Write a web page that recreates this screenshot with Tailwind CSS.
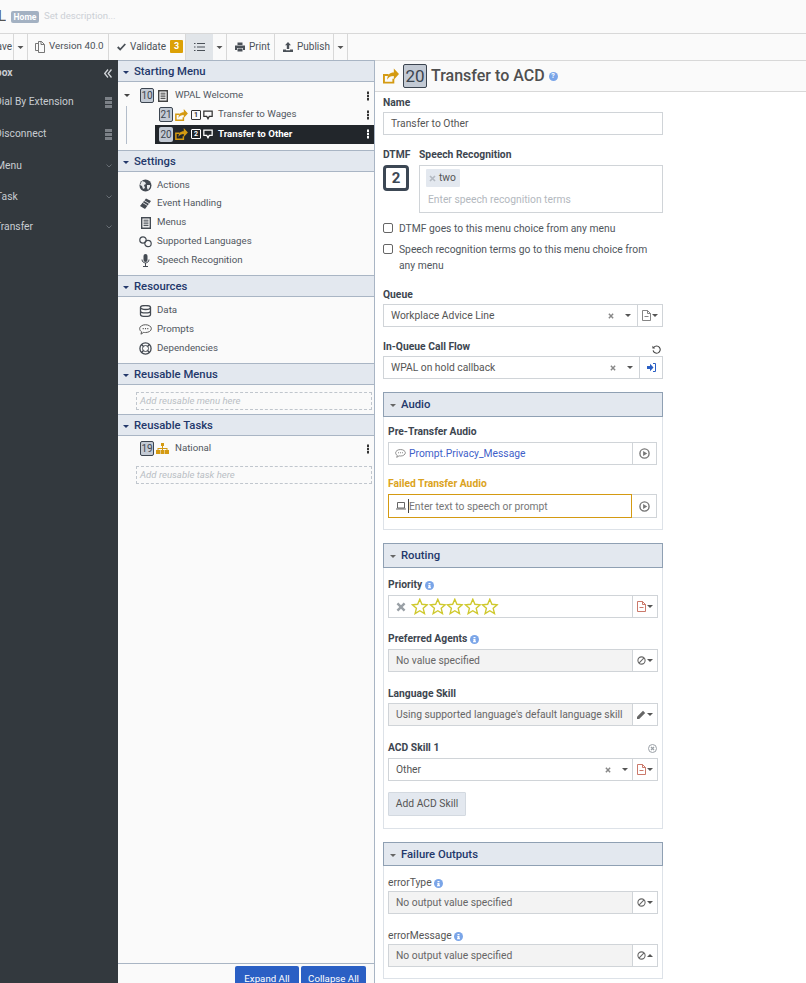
<!DOCTYPE html>
<html lang="en">
<head>
  <meta charset="UTF-8">
  <title>WPAL</title>
  <script src="https://cdn.jsdelivr.net/npm/@tailwindcss/browser@4"></script>
</head>
<body class="font-['Roboto',sans-serif] text-[10.3px] text-[#50565c] bg-white overflow-hidden">
<svg class="hidden" width="0" height="0">
  <symbol id="transfer" viewBox="0 0 17 16"><path d="M0 6h6v2H2v6h8v-3h2v5H0z" fill="#d49a12"/><path d="M4.500 12c0-5 2.500-7.800 7-7.800V0L17 6l-5.500 6V8c-3.500 0-5.500 1-7 4z" fill="#d49a12"/></symbol>
  <symbol id="caret" viewBox="0 0 8 4"><path d="M0 0h8L4 4z" fill="currentColor"/></symbol>
  <symbol id="kebab" viewBox="0 0 3 11"><path d="M0 0h3v3H0zM0 4h3v3H0zM0 8h3v3H0z" fill="currentColor"/></symbol>
  <symbol id="menuicon" viewBox="0 0 10 12"><path d="M.7.700h8.600v10.600H.7z" fill="none" stroke="currentColor" stroke-width="1.400"/><path d="M2.500 3.200h5M2.500 5h5M2.500 6.800h5M2.500 8.600h5" stroke="currentColor" stroke-width="1"/></symbol>
  <symbol id="bubble" viewBox="0 0 12 11"><path d="M1 .800h10v6.400H7.500L6 10 4.500 7.200H1z" fill="none" stroke="currentColor" stroke-width="1.500"/></symbol>
  <symbol id="doc" viewBox="0 0 9 11"><path d="M.5.500h5l3 3v7h-8zM5.500.500v3h3M2.500 6.500h4" fill="none" stroke="currentColor" stroke-width=".9"/></symbol>
  <symbol id="ban" viewBox="0 0 10 10"><circle cx="5" cy="5" r="4" fill="none" stroke="currentColor" stroke-width="1.200"/><path d="M2.200 7.800l5.600-5.600" stroke="currentColor" stroke-width="1.200"/></symbol>
  <symbol id="play" viewBox="0 0 12 12"><circle cx="6" cy="6" r="5" fill="none" stroke="currentColor" stroke-width="1.500"/><path d="M4.500 3.300L9 6l-4.500 2.700z" fill="currentColor"/></symbol>
  <symbol id="clear" viewBox="0 0 7 7"><path d="M1 1l5 5M6 1L1 6" stroke="currentColor" stroke-width="1.700"/></symbol>
  <symbol id="info" viewBox="0 0 9 9"><circle cx="4.500" cy="4.500" r="4.500" fill="#7aa5e8"/><path d="M3.500 2h2v1.200h-2zM3.500 3.900h2v2.300h.5v1H3v-1h.5v-1.300h-.4z" fill="#fff"/></symbol>
  <symbol id="star" viewBox="0 0 16 16"><path d="M8 1.200l2 4.700 5 .5-3.800 3.300 1.200 5L8 12l-4.400 2.700 1.200-5L1 6.400l5-.5z" fill="none" stroke="#cfc92e" stroke-width="1.300"/></symbol>
  <symbol id="bubbledots" viewBox="0 0 12 10"><path d="M6 .6c3 0 5.400 1.600 5.400 3.600S9 7.800 6 7.800c-.6 0-1.100 0-1.600-.2L1.800 9.300l.6-2.200C1.200 6.400.6 5.300.6 4.200.6 2.200 3 .6 6 .6z" fill="none" stroke="currentColor" stroke-width=".9"/><path d="M3.400 3.700h1v1h-1zM5.500 3.700h1v1h-1zM7.600 3.700h1v1h-1z" fill="currentColor"/></symbol>
</svg>

<div class="w-[806px] h-[983px] flex flex-col overflow-hidden">
  <!-- Header -->
  <div class="h-[34px] shrink-0 flex items-center bg-[#fafafa] border-b border-[#d8d8d8] overflow-hidden">
    <span class="w-[6px] overflow-hidden flex justify-end text-[15px] text-[#555]"><span class="shrink-0">WPAL</span></span>
    <span class="ml-[5px] w-[28px] h-[12px] bg-[#a3b1c2] rounded-[2px] text-white text-[8.5px] font-bold leading-[12px] text-center">Home</span>
    <span class="ml-[5px] text-[#ccd0d6] text-[9.6px]">Set description...</span>
  </div>
  <!-- Toolbar -->
  <div class="h-[26px] shrink-0 flex items-stretch bg-[#fafafa] text-[#4b5158] text-[10px] whitespace-nowrap">
    <div class="w-[14px] border-r border-[#d8d8d8] flex items-center justify-end overflow-hidden pb-[1px]"><span class="shrink-0 pr-[1px]">Save</span></div>
    <div class="w-[14px] border-r border-[#d8d8d8] flex items-center justify-center text-[#555]"><svg class="w-[7px] h-[3px]"><use href="#caret"/></svg></div>
    <div class="w-[81px] border-r border-[#d8d8d8] flex items-center pl-[7px] gap-[4px] text-[9.8px] pb-[1px]"><svg class="w-[10px] h-[12px] text-[#555]" viewBox="0 0 10 12"><path d="M.5 2.500h3v-2h3l3 3v8h-6v-2h-3zM3.500 2.500v7M6 .5v3h3" fill="none" stroke="currentColor" stroke-width=".8"/></svg>Version 40.0</div>
    <div class="w-[77px] border-r border-[#d8d8d8] flex items-center pl-[8px] gap-[4px] pb-[1px]"><svg class="w-[9px] h-[8px]" viewBox="0 0 9 8"><path d="M.7 4l2.500 2.500L8.300 1" fill="none" stroke="#4b5158" stroke-width="1.800"/></svg>Validate<span class="w-[13px] h-[13px] bg-[#dca106] rounded-[1px] text-white text-[9px] font-bold text-center leading-[13px]">3</span></div>
    <div class="w-[27px] bg-[#e1e5e9] flex items-center justify-center"><svg class="w-[11px] h-[10px]" viewBox="0 0 11 10"><path d="M3 1.500h8M3 5h8M3 8.500h8" stroke="#4b5158" stroke-width="1.200"/><path d="M0 1h1.500v1H0zM0 4.500h1.500v1H0zM0 8h1.500v1H0z" fill="#4b5158"/></svg></div>
    <div class="w-[14px] border-r border-[#d8d8d8] flex items-center justify-center text-[#555]"><svg class="w-[7px] h-[3px]"><use href="#caret"/></svg></div>
    <div class="w-[48px] border-r border-[#d8d8d8] flex items-center pl-[8px] gap-[4px] pb-[1px]"><svg class="w-[10px] h-[10px]" viewBox="0 0 10 10"><path d="M2.500 3V.5h5V3M0 3.500h10V8H8V6H2v2H0zM2.500 6.500h5v3h-5z" fill="#4b5158"/></svg>Print</div>
    <div class="w-[59px] border-r border-[#d8d8d8] flex items-center pl-[8px] gap-[4px] pb-[1px]"><svg class="w-[10px] h-[10px]" viewBox="0 0 10 10"><path d="M5 0l3 3.200H6.200V7H3.800V3.200H2zM0 7.500h3V8.300h4V7.500h3V10H0z" fill="#4b5158"/></svg>Publish</div>
    <div class="w-[14px] border-r border-[#d8d8d8] flex items-center justify-center text-[#555]"><svg class="w-[7px] h-[3px]"><use href="#caret"/></svg></div>
  </div>

  <div class="flex-1 flex min-h-0">
    <!-- Toolbox -->
    <aside class="w-[118px] shrink-0 bg-[#33393e] text-[#c8ccd1] overflow-hidden whitespace-nowrap">
      <div class="h-[26px] flex items-center justify-between pr-[6px] font-bold"><span class="-ml-[24px]">Toolbox</span><svg class="w-[8px] h-[9px]" viewBox="0 0 8 9"><path d="M4 .5L.7 4.500 4 8.500M7.500 .5L4.200 4.500l3.300 4" fill="none" stroke="#d0d4d8" stroke-width="1.300"/></svg></div>
      <div class="h-[32px] flex items-center justify-between pr-[6px]"><span class="-ml-[5px]">Dial By Extension</span><span class="w-[7px] h-[11px] bg-[repeating-linear-gradient(#7c8187_0_3px,transparent_3px_4px)]"></span></div>
      <div class="h-[32px] flex items-center justify-between pr-[6px]"><span class="-ml-[5px]">Disconnect</span><span class="w-[7px] h-[11px] bg-[repeating-linear-gradient(#7c8187_0_3px,transparent_3px_4px)]"></span></div>
      <div class="h-[32px] flex items-center justify-between pr-[6px]"><span class="-ml-[4px]">Menu</span><svg class="w-[6px] h-[4px]" viewBox="0 0 6 4"><path d="M.5.500L3 3 5.500.500" fill="none" stroke="#676d73"/></svg></div>
      <div class="h-[30px] flex items-center justify-between pr-[6px]"><span class="-ml-[4px]">Task</span><svg class="w-[6px] h-[4px]" viewBox="0 0 6 4"><path d="M.5.500L3 3 5.500.500" fill="none" stroke="#676d73"/></svg></div>
      <div class="h-[30px] flex items-center justify-between pr-[6px]"><span class="-ml-[5px]">Transfer</span><svg class="w-[6px] h-[4px]" viewBox="0 0 6 4"><path d="M.5.500L3 3 5.500.500" fill="none" stroke="#676d73"/></svg></div>
    </aside>

    <!-- Tree panel -->
    <section class="w-[257px] shrink-0 bg-[#fafafa] flex flex-col border-r border-[#a9b5c4] text-[#50565e] text-[9.7px]">
      <div class="h-[22px] shrink-0 bg-[#e3e8ef] border-y border-[#a9b5c4] pt-[2px] flex items-center text-[#24386b] text-[11.3px] font-medium"><svg class="ml-[5px] mr-[5px] w-[6px] h-[3px]"><use href="#caret"/></svg>Starting Menu</div>
      <div class="h-[68px] shrink-0 pt-[4px] relative">
        <div class="absolute left-[8px] top-[24px] w-px h-[38px] bg-[#b3bdca]"></div>
        <div class="h-[19px] flex items-center pr-[5px]">
          <svg class="ml-[6px] w-[6px] h-[3px] text-[#444]"><use href="#caret"/></svg>
          <span class="ml-[10px] w-[14px] h-[15px] bg-[#c3cad4] border border-[#3c4550] rounded-[2px] text-[10px] text-[#3c4550] text-center leading-[13px]">10</span>
          <svg class="ml-[4px] w-[10px] h-[12px] text-[#444]"><use href="#menuicon"/></svg>
          <span class="ml-[7px]">WPAL Welcome</span>
          <svg class="ml-auto w-[2.500px] h-[10px] text-[#333]"><use href="#kebab"/></svg>
        </div>
        <div class="h-[20px] pb-[1px] flex items-center pr-[5px] pl-[41px]">
          <span class="w-[14px] h-[15px] bg-[#c3cad4] border border-[#3c4550] rounded-[2px] text-[10px] text-[#3c4550] text-center leading-[13px]">21</span>
          <svg class="ml-[2px] w-[13px] h-[12px]"><use href="#transfer"/></svg>
          <span class="ml-[3px] w-[10px] h-[10px] border border-[#333] rounded-[1px] text-[7px] font-bold text-center leading-[8px] text-[#333]">1</span>
          <svg class="ml-[2px] w-[10px] h-[10px] text-[#333]"><use href="#bubble"/></svg>
          <span class="ml-[5px]">Transfer to Wages</span>
          <svg class="ml-auto w-[2.500px] h-[10px] text-[#333]"><use href="#kebab"/></svg>
        </div>
        <div class="ml-[37px] h-[19px] pb-[1px] bg-[#22262b] flex items-center pr-[5px] pl-[4px] text-white font-bold">
          <span class="w-[14px] h-[15px] bg-[#c3cad4] rounded-[2px] text-[10px] font-normal text-[#3c4550] text-center leading-[15px]">20</span>
          <svg class="ml-[2px] w-[13px] h-[12px]"><use href="#transfer"/></svg>
          <span class="ml-[3px] w-[10px] h-[10px] border border-white rounded-[1px] text-[7px] text-center leading-[8px]">2</span>
          <svg class="ml-[2px] w-[10px] h-[10px] text-white"><use href="#bubble"/></svg>
          <span class="ml-[5px]">Transfer to Other</span>
          <svg class="ml-auto w-[2.500px] h-[10px] text-white"><use href="#kebab"/></svg>
        </div>
      </div>

      <div class="h-[22px] shrink-0 bg-[#e3e8ef] border-y border-[#a9b5c4] pt-[2px] flex items-center text-[#24386b] text-[11.3px] font-medium"><svg class="ml-[5px] mr-[5px] w-[6px] h-[3px]"><use href="#caret"/></svg>Settings</div>
      <div class="h-[103px] shrink-0 pt-[4px] pl-[21px]">
        <div class="h-[18px] flex items-center gap-[5px]"><svg class="w-[13px] h-[13px]" viewBox="0 0 13 13"><circle cx="6.500" cy="6.500" r="6" fill="#444a52"/><path d="M3 2l3 1 1 2-2 1 1 3-2 1-1-3-2-1zM8 6l3 0 0 2-2 3-1-2z" fill="#e8eaec"/></svg>Actions</div>
        <div class="h-[19px] flex items-center gap-[5px]"><svg class="w-[13px] h-[12px]" viewBox="0 0 13 12"><path d="M7 .5l5 2.500-6 8-5-3z" fill="#444a52"/><path d="M5 2.500l5 3M3.500 4.500l5 3" stroke="#fff" stroke-width=".8"/></svg>Event Handling</div>
        <div class="h-[19px] flex items-center gap-[5px]"><span class="w-[13px] flex justify-center"><svg class="w-[10px] h-[12px] text-[#444a52]"><use href="#menuicon"/></svg></span>Menus</div>
        <div class="h-[19px] flex items-center gap-[5px]"><svg class="w-[13px] h-[12px]" viewBox="0 0 13 12"><circle cx="4" cy="4" r="3.200" fill="none" stroke="#444a52" stroke-width="1.200"/><circle cx="9" cy="7.500" r="3.200" fill="none" stroke="#444a52" stroke-width="1.200"/></svg>Supported Languages</div>
        <div class="h-[19px] flex items-center gap-[5px]"><svg class="w-[13px] h-[13px]" viewBox="0 0 13 13"><rect x="4.500" y="0" width="4" height="8" rx="2" fill="#444a52"/><path d="M3 5.500c0 4.500 7 4.500 7 0M6.500 9v3M4 12.500h5" fill="none" stroke="#444a52"/></svg>Speech Recognition</div>
      </div>

      <div class="h-[22px] shrink-0 bg-[#e3e8ef] border-y border-[#a9b5c4] pt-[2px] flex items-center text-[#24386b] text-[11.3px] font-medium"><svg class="ml-[5px] mr-[5px] w-[6px] h-[3px]"><use href="#caret"/></svg>Resources</div>
      <div class="h-[66px] shrink-0 pt-[4px] pl-[21px]">
        <div class="h-[19px] flex items-center gap-[5px]"><svg class="w-[13px] h-[12px]" viewBox="0 0 13 12"><ellipse cx="6.500" cy="2.500" rx="5" ry="2" fill="none" stroke="#444a52" stroke-width="1.300"/><path d="M1.500 2.500v7c0 2.600 10 2.600 10 0v-7M1.500 6c0 2.600 10 2.600 10 0" fill="none" stroke="#444a52" stroke-width="1.300"/></svg>Data</div>
        <div class="h-[19px] flex items-center gap-[5px]"><svg class="w-[13px] h-[11px] text-[#555]"><use href="#bubbledots"/></svg>Prompts</div>
        <div class="h-[19px] flex items-center gap-[5px]"><svg class="w-[13px] h-[13px]" viewBox="0 0 13 13"><circle cx="6.500" cy="6.500" r="5.600" fill="none" stroke="#444a52" stroke-width="1.300"/><circle cx="6.500" cy="6.500" r="3" fill="none" stroke="#444a52"/><path d="M2.500 2.500l2 2M10.500 2.500l-2 2M2.500 10.500l2-2M10.500 10.500l-2-2" stroke="#444a52" stroke-width="1.300"/></svg>Dependencies</div>
      </div>

      <div class="h-[22px] shrink-0 bg-[#e3e8ef] border-y border-[#a9b5c4] pt-[2px] flex items-center text-[#24386b] text-[11.3px] font-medium"><svg class="ml-[5px] mr-[5px] w-[6px] h-[3px]"><use href="#caret"/></svg>Reusable Menus</div>
      <div class="h-[29px] shrink-0 pt-[7px] pl-[18px] pr-[2px]"><div class="h-[18px] border border-dashed border-[#c0c6cd] pl-[3px] italic text-[#b9bec4] text-[9.6px] leading-[16px]">Add reusable menu here</div></div>

      <div class="h-[22px] shrink-0 bg-[#e3e8ef] border-y border-[#a9b5c4] pt-[2px] flex items-center text-[#24386b] text-[11.3px] font-medium"><svg class="ml-[5px] mr-[5px] w-[6px] h-[3px]"><use href="#caret"/></svg>Reusable Tasks</div>
      <div class="pt-[4px] pl-[22px] pr-[5px]">
        <div class="h-[17px] flex items-center">
          <span class="w-[14px] h-[15px] bg-[#c3cad4] border border-[#3c4550] rounded-[2px] text-[10px] text-[#3c4550] text-center leading-[13px]">19</span>
          <svg class="ml-[2px] w-[13px] h-[11px]" viewBox="0 0 13 11"><path d="M5 0h3v3H5zM6 3h1v2h4.500v2h-1V6H7v1H6V6H2.500v1h-1V5H6zM0 7h4v4H0zM4.500 7h4v4h-4zM9 7h4v4H9z" fill="#d49a12"/></svg>
          <span class="ml-[6px]">National</span>
          <svg class="ml-auto w-[2.500px] h-[10px] text-[#333]"><use href="#kebab"/></svg>
        </div>
      </div>
      <div class="pt-[9px] pl-[18px] pr-[2px]"><div class="h-[18px] border border-dashed border-[#c0c6cd] pl-[3px] italic text-[#b9bec4] text-[9.6px] leading-[16px]">Add reusable task here</div></div>

      <div class="mt-auto h-[20px] border-t border-[#a9b5c4] flex justify-end gap-[2px] pr-[8px] pt-[2px]">
        <span class="w-[64px] h-[20px] bg-[#2a5fc4] rounded-[2px] text-white text-center leading-[25px]">Expand All</span>
        <span class="w-[65px] h-[20px] bg-[#2a5fc4] rounded-[2px] text-white text-center leading-[25px]">Collapse All</span>
      </div>
    </section>

    <!-- Properties panel -->
    <main class="flex-1 min-w-0 bg-white overflow-hidden">
      <div class="h-[32px] bg-[#fafafa] border-y border-[#d8d8d8] flex items-center pl-[8px] text-[#4a4a4a]">
        <svg class="w-[16px] h-[16px]"><use href="#transfer"/></svg>
        <span class="ml-[4px] w-[24px] h-[24px] bg-[#c3cad4] border border-[#3c4550] rounded-[2px] text-[17px] text-[#3c4550] text-center leading-[22px]">20</span>
        <span class="ml-[4px] text-[16px] font-medium text-[#4f4f4f]">Transfer to ACD</span>
        <span class="ml-[4px] w-[9px] h-[9px] rounded-full bg-[#7aa5e8] text-white text-[7px] font-bold text-center leading-[9px]">?</span>
      </div>

      <div class="w-[280px] ml-[8px]">
        <label class="block mt-[4px] h-[14px] font-bold leading-[14px] text-[#3d4650]">Name</label>
        <div class="mt-[2px] h-[23px] border border-[#d0d4d8] pl-[7px] leading-[22px] text-[#555]">Transfer to Other</div>

        <div class="mt-[13px] flex">
          <div class="w-[36px]">
            <div class="h-[14px] font-bold leading-[14px] text-[#3d4650]">DTMF</div>
            <div class="mt-[3px] w-[26px] h-[26px] border-[3px] border-[#3c4754] rounded-[4px] text-[15px] font-bold text-[#3c4754] text-center leading-[20px]">2</div>
          </div>
          <div class="flex-1">
            <div class="h-[14px] font-bold leading-[14px] text-[#3d4650]">Speech Recognition</div>
            <div class="mt-[3px] h-[48px] border border-[#d0d4d8] pl-[6px] pt-[3px]">
              <div class="w-[34px] h-[18px] bg-[#e3e8ef] rounded-[1px] flex items-center pl-[3px] gap-[3px] text-[#555]"><svg class="w-[7px] h-[7px] text-[#b4bac2]"><use href="#clear"/></svg>two</div>
              <div class="mt-[4px] pl-[2px] h-[17px] leading-[17px] text-[#b3b8be]">Enter speech recognition terms</div>
            </div>
          </div>
        </div>

        <div class="mt-[9px] flex items-start h-[17px] leading-[14px]"><span class="mt-[1px] w-[10px] h-[10px] border border-[#666] rounded-[2px] bg-white shrink-0"></span><span class="ml-[6px]">DTMF goes to this menu choice from any menu</span></div>
        <div class="mt-[3px] flex items-start leading-[16px]"><span class="mt-[2px] w-[10px] h-[10px] border border-[#666] rounded-[2px] bg-white shrink-0"></span><span class="ml-[6px] w-[262px]">Speech recognition terms go to this menu choice from any menu</span></div>

        <label class="block mt-[14px] h-[14px] font-bold leading-[14px] text-[#3d4650]">Queue</label>
        <div class="mt-[2px] h-[23px] border border-[#d0d4d8] flex items-center pl-[7px] text-[#555]">
          <span class="pt-[1px]">Workplace Advice Line</span>
          <svg class="ml-auto w-[6px] h-[6px] text-[#888]"><use href="#clear"/></svg>
          <svg class="ml-[11px] w-[6px] h-[3px] text-[#555]"><use href="#caret"/></svg>
          <span class="ml-[6px] w-[25px] h-full border-l border-[#d0d4d8] flex items-center justify-center gap-[1px] text-[#777]"><svg class="w-[9px] h-[11px]"><use href="#doc"/></svg><svg class="w-[6px] h-[3px] text-[#555]"><use href="#caret"/></svg></span>
        </div>

        <div class="mt-[13px] h-[14px] flex items-center justify-between">
          <span class="font-bold text-[#3d4650]">In-Queue Call Flow</span>
          <svg class="w-[9px] h-[9px] mr-[2px] mt-[4px]" viewBox="0 0 10 10"><path d="M2 2.600A4 4 0 1 1 1.200 6" fill="none" stroke="#444" stroke-width="1.200"/><path d="M.5 .8v3h3z" fill="#444"/></svg>
        </div>
        <div class="mt-[2px] h-[23px] border border-[#d0d4d8] flex items-center pl-[7px] text-[#555]">
          <span class="pt-[1px]">WPAL on hold callback</span>
          <svg class="ml-auto w-[6px] h-[6px] text-[#888]"><use href="#clear"/></svg>
          <svg class="ml-[11px] w-[6px] h-[3px] text-[#555]"><use href="#caret"/></svg>
          <span class="ml-[6px] w-[23px] h-full border-l border-[#d0d4d8] flex items-center justify-center"><svg class="w-[9px] h-[9px]" viewBox="0 0 9 9"><path d="M0 3h3V.8L6.500 4.500 3 8.200V6H0z" fill="#2a5fc4"/><path d="M6 .5h2.500v8H6" fill="none" stroke="#2a5fc4"/></svg></span>
        </div>

        <!-- Audio -->
        <div class="mt-[13px] h-[138px] border border-[#dde2e8]">
          <div class="h-[25px] -mx-px -mt-px pt-[2px] bg-[#e3e8ef] border border-[#8fa0b3] flex items-center text-[#24386b] text-[11.3px] font-medium"><svg class="ml-[6px] mr-[5px] w-[6px] h-[3px] text-[#666]"><use href="#caret"/></svg>Audio</div>
          <div class="px-[4px]">
            <div class="mt-[8px] h-[14px] font-bold leading-[14px] text-[#3d4650]">Pre-Transfer Audio</div>
            <div class="mt-[3px] h-[23px] w-[269px] border border-[#d0d4d8] flex items-center pl-[6px] text-[#3f5fc9]">
              <svg class="w-[11px] h-[9px] text-[#777]"><use href="#bubbledots"/></svg><span class="ml-[3px] pt-[1px]">Prompt.Privacy_Message</span>
              <span class="ml-auto w-[24px] h-full border-l border-[#d0d4d8] flex items-center justify-center text-[#777]"><svg class="w-[11px] h-[11px]"><use href="#play"/></svg></span>
            </div>
            <div class="mt-[12px] h-[14px] font-bold leading-[14px] text-[#dba321]">Failed Transfer Audio</div>
            <div class="mt-[3px] h-[24px] w-[269px] flex">
              <div class="w-[244px] border border-[#d49a12] flex items-center pl-[7px] text-[#777]"><svg class="w-[10px] h-[8px]" viewBox="0 0 10 8"><path d="M1.500.5h7v5.500h-7zM0 7h10" fill="none" stroke="#555" stroke-width=".9"/></svg><span class="ml-[2px] w-px h-[14px] bg-[#444]"></span><span class="pt-[1px]">Enter text to speech or prompt</span></div>
              <span class="flex-1 border border-l-0 border-[#d0d4d8] flex items-center justify-center text-[#777]"><svg class="w-[11px] h-[11px]"><use href="#play"/></svg></span>
            </div>
          </div>
        </div>

        <!-- Routing -->
        <div class="mt-[13px] h-[286px] border border-[#dde2e8]">
          <div class="h-[25px] -mx-px -mt-px pt-[2px] bg-[#e3e8ef] border border-[#8fa0b3] flex items-center text-[#24386b] text-[11.3px] font-medium"><svg class="ml-[6px] mr-[5px] w-[6px] h-[3px] text-[#666]"><use href="#caret"/></svg>Routing</div>
          <div class="px-[4px]">
            <div class="mt-[10px] h-[14px] flex items-center gap-[3px] font-bold text-[#3d4650]">Priority<svg class="w-[9px] h-[9px]"><use href="#info"/></svg></div>
            <div class="mt-[3px] h-[23px] w-[270px] border border-[#d0d4d8] flex items-center pl-[7px]">
              <svg class="w-[10px] h-[10px] text-[#9aa0a6]"><use href="#clear"/></svg>
              <span class="ml-[5px] flex"><svg class="w-[17.6px] h-[17px]"><use href="#star"/></svg><svg class="w-[17.6px] h-[17px]"><use href="#star"/></svg><svg class="w-[17.6px] h-[17px]"><use href="#star"/></svg><svg class="w-[17.6px] h-[17px]"><use href="#star"/></svg><svg class="w-[17.6px] h-[17px]"><use href="#star"/></svg></span>
              <span class="ml-auto w-[25px] h-full border-l border-[#d0d4d8] flex items-center justify-center gap-[1px] text-[#777]"><svg class="w-[9px] h-[11px] text-[#c56a5a]"><use href="#doc"/></svg><svg class="w-[6px] h-[3px] text-[#555]"><use href="#caret"/></svg></span>
            </div>

            <div class="mt-[14px] h-[14px] flex items-center gap-[3px] font-bold text-[#3d4650]">Preferred Agents<svg class="w-[9px] h-[9px]"><use href="#info"/></svg></div>
            <div class="mt-[3px] h-[23px] w-[270px] border border-[#d0d4d8] flex items-center bg-white">
              <span class="flex-1 h-full bg-[#f3f3f3] pl-[7px] leading-[21px] text-[#666]">No value specified</span>
              <span class="w-[25px] h-full border-l border-[#d0d4d8] flex items-center justify-center gap-[1px] text-[#666]"><svg class="w-[9px] h-[9px]"><use href="#ban"/></svg><svg class="w-[6px] h-[3px] text-[#555]"><use href="#caret"/></svg></span>
            </div>

            <div class="mt-[15px] h-[14px] font-bold leading-[14px] text-[#3d4650]">Language Skill</div>
            <div class="mt-[2px] h-[23px] w-[270px] border border-[#d0d4d8] flex items-center bg-white">
              <span class="flex-1 h-full bg-[#f3f3f3] pl-[7px] leading-[22px] text-[#666] whitespace-nowrap overflow-hidden">Using supported language's default language skill</span>
              <span class="w-[25px] h-full border-l border-[#d0d4d8] flex items-center justify-center gap-[1px] text-[#666]"><svg class="w-[9px] h-[9px]" viewBox="0 0 9 9"><path d="M0 9V6.800L6 .8 8.200 3 2.200 9z" fill="#666"/></svg><svg class="w-[6px] h-[3px] text-[#555]"><use href="#caret"/></svg></span>
            </div>

            <div class="mt-[15px] h-[14px] flex items-center justify-between font-bold text-[#3d4650]">ACD Skill 1<svg class="w-[9px] h-[9px] mr-[1px]" viewBox="0 0 9 9"><circle cx="4.500" cy="4.500" r="4" fill="none" stroke="#9aa0a6"/><path d="M3 3l3 3M6 3L3 6" stroke="#9aa0a6" stroke-width="1.200"/></svg></div>
            <div class="mt-[3px] h-[23px] w-[270px] border border-[#d0d4d8] flex items-center pl-[7px] text-[#555]">
              <span class="pt-[1px]">Other</span>
              <svg class="ml-auto w-[6px] h-[6px] text-[#888]"><use href="#clear"/></svg>
              <svg class="ml-[11px] w-[6px] h-[3px] text-[#555]"><use href="#caret"/></svg>
              <span class="ml-[4px] w-[25px] h-full border-l border-[#d0d4d8] flex items-center justify-center gap-[1px] text-[#777]"><svg class="w-[9px] h-[11px] text-[#c56a5a]"><use href="#doc"/></svg><svg class="w-[6px] h-[3px] text-[#555]"><use href="#caret"/></svg></span>
            </div>
            <div class="mt-[11px] w-[78px] h-[24px] bg-[#e3e8ef] border border-[#d3d9e0] rounded-[1px] text-center leading-[22px] text-[#555]">Add ACD Skill</div>
          </div>
        </div>

        <!-- Failure Outputs -->
        <div class="mt-[13px] h-[137px] border border-[#dde2e8]">
          <div class="h-[24px] -mx-px -mt-px pt-[2px] bg-[#e3e8ef] border border-[#8fa0b3] flex items-center text-[#24386b] text-[11.3px] font-medium"><svg class="ml-[6px] mr-[5px] w-[6px] h-[3px] text-[#666]"><use href="#caret"/></svg>Failure Outputs</div>
          <div class="px-[4px]">
            <div class="mt-[10px] h-[14px] flex items-center gap-[2px] text-[#555]">errorType<svg class="w-[9px] h-[9px]"><use href="#info"/></svg></div>
            <div class="mt-[1px] h-[23px] w-[270px] border border-[#d0d4d8] flex items-center bg-white">
              <span class="flex-1 h-full bg-[#f3f3f3] pl-[7px] leading-[21px] text-[#666]">No output value specified</span>
              <span class="w-[25px] h-full border-l border-[#d0d4d8] flex items-center justify-center gap-[1px] text-[#666]"><svg class="w-[9px] h-[9px]"><use href="#ban"/></svg><svg class="w-[6px] h-[3px] text-[#555]"><use href="#caret"/></svg></span>
            </div>
            <div class="mt-[15px] h-[14px] flex items-center gap-[2px] text-[#555]">errorMessage<svg class="w-[9px] h-[9px]"><use href="#info"/></svg></div>
            <div class="mt-[1px] h-[23px] w-[270px] border border-[#d0d4d8] flex items-center bg-white">
              <span class="flex-1 h-full bg-[#f3f3f3] pl-[7px] leading-[21px] text-[#666]">No output value specified</span>
              <span class="w-[25px] h-full border-l border-[#d0d4d8] flex items-center justify-center gap-[1px] text-[#666]"><svg class="w-[9px] h-[9px]"><use href="#ban"/></svg><svg class="w-[6px] h-[3px] text-[#555] rotate-180"><use href="#caret"/></svg></span>
            </div>
          </div>
        </div>
      </div>
    </main>
  </div>
</div>
</body>
</html>
